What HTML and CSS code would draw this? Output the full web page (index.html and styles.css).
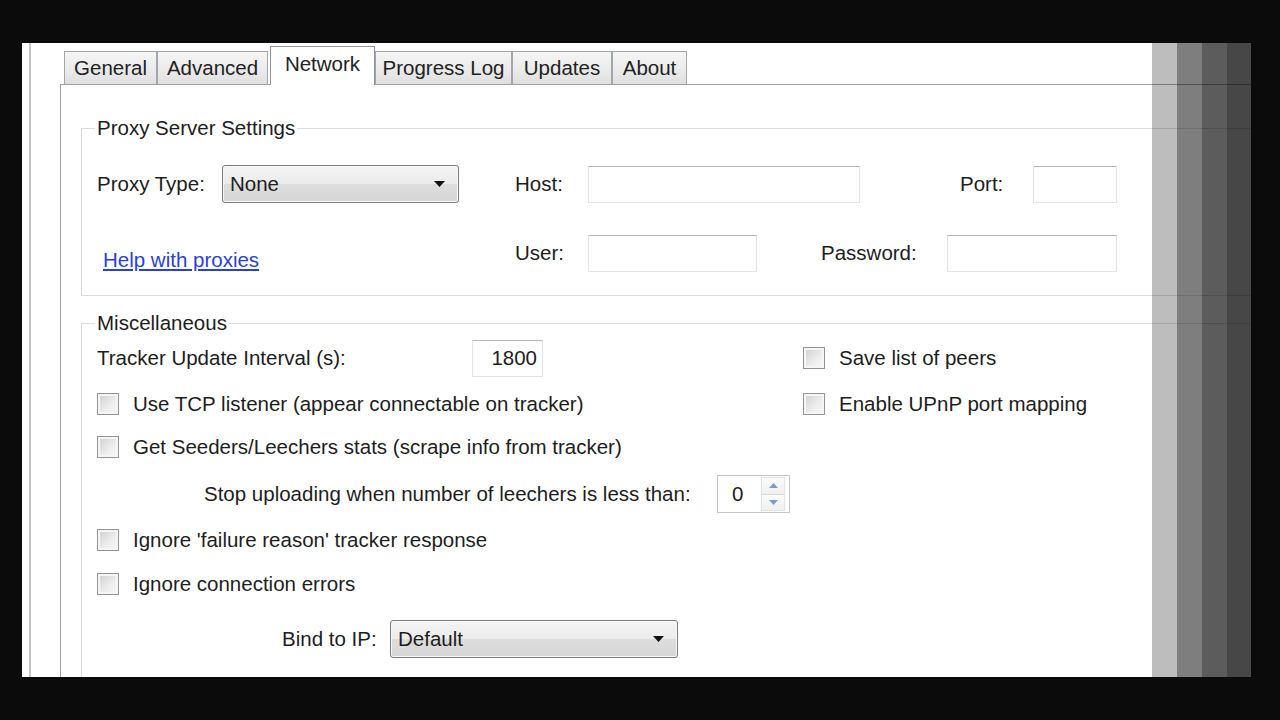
FILE: index.html
```html
<!DOCTYPE html>
<html lang="en">
<head>
<meta charset="utf-8">
<title>Network settings</title>
<link rel="stylesheet" href="styles.css">
</head>
<body>
<div class="stage">
  <div class="window">
    <div class="rail"></div>
    <div class="dialog">
      <div class="tabs">
        <div class="tab t-general">General</div>
        <div class="tab t-advanced">Advanced</div>
        <div class="tab sel t-network">Network</div>
        <div class="tab t-progress">Progress Log</div>
        <div class="tab t-updates">Updates</div>
        <div class="tab t-about">About</div>
      </div>
      <div class="panel">
        <fieldset class="group group-proxy">
          <legend>Proxy Server Settings</legend>
          <div class="prow prow-1">
            <span class="lbl lbl-ptype">Proxy Type:</span>
            <div class="select sel-proxy"><span>None</span><svg class="arrow" width="11" height="6" viewBox="0 0 11 6"><polygon points="0,0 11,0 5.5,6" fill="#111"/></svg></div>
            <span class="lbl lbl-host">Host:</span>
            <div class="input in-host"></div>
            <span class="lbl lbl-port">Port:</span>
            <div class="input in-port"></div>
          </div>
          <div class="prow prow-2">
            <a class="help" href="#">Help with proxies</a>
            <span class="lbl lbl-user">User:</span>
            <div class="input in-user"></div>
            <span class="lbl lbl-pass">Password:</span>
            <div class="input in-pass"></div>
          </div>
        </fieldset>
        <fieldset class="group group-misc">
          <legend>Miscellaneous</legend>
          <div class="mrow row-a">
            <div class="cell">
              <span class="lbl lbl-tracker">Tracker Update Interval (s):</span>
              <div class="input in-interval">1800</div>
            </div>
            <label class="check"><span class="box"></span><span>Save list of peers</span></label>
          </div>
          <div class="mrow row-b">
            <label class="check"><span class="box"></span><span>Use TCP listener (appear connectable on tracker)</span></label>
            <label class="check"><span class="box"></span><span>Enable UPnP port mapping</span></label>
          </div>
          <div class="mrow row-c">
            <label class="check"><span class="box"></span><span>Get Seeders/Leechers stats (scrape info from tracker)</span></label>
          </div>
          <div class="mrow row-d">
            <div class="cell">
              <span class="lbl lbl-stop">Stop uploading when number of leechers is less than:</span>
              <div class="spin">
                <span class="spin-val">0</span>
                <div class="spin-btns">
                  <div class="spin-btn"><svg width="9" height="5" viewBox="0 0 9 5"><polygon points="0,5 9,5 4.5,0" fill="#7c9cc4"/></svg></div>
                  <div class="spin-btn"><svg width="9" height="5" viewBox="0 0 9 5"><polygon points="0,0 9,0 4.5,5" fill="#7c9cc4"/></svg></div>
                </div>
              </div>
            </div>
          </div>
          <div class="mrow row-e">
            <label class="check"><span class="box"></span><span>Ignore 'failure reason' tracker response</span></label>
          </div>
          <div class="mrow row-f">
            <label class="check"><span class="box"></span><span>Ignore connection errors</span></label>
          </div>
          <div class="mrow row-g">
            <div class="cell">
              <span class="lbl lbl-bind">Bind to IP:</span>
              <div class="select sel-bind"><span>Default</span><svg class="arrow" width="11" height="6" viewBox="0 0 11 6"><polygon points="0,0 11,0 5.5,6" fill="#111"/></svg></div>
            </div>
          </div>
        </fieldset>
      </div>
    </div>
  </div>
  <div class="shade">
    <div class="band b1"></div>
    <div class="band b2"></div>
    <div class="band b3"></div>
    <div class="band b4"></div>
  </div>
</div>
</body>
</html>
```
FILE: styles.css
```css
* { box-sizing: border-box; }

html, body {
  margin: 0;
  width: 1280px;
  height: 720px;
  overflow: hidden;
  background: #0b0b0b;
}

body {
  font-family: "Liberation Sans", Arial, sans-serif;
  font-size: 20.5px;
  color: #1d1d1d;
}

.stage {
  position: relative;
  height: 720px;
  padding: 43px 0 0 22px;
}

.window {
  width: 1229px;
  height: 634px;
  background: #ffffff;
  display: flex;
  padding-left: 7px;
  overflow: hidden;
}

.rail {
  flex: none;
  width: 2px;
  background: #c4c4c4;
}

.dialog {
  flex: none;
  width: 1250px;
  margin-left: 29px;
  display: flex;
  flex-direction: column;
}

/* tabs */
.tabs {
  flex: none;
  height: 41px;
  display: flex;
  align-items: flex-end;
  padding-left: 4px;
}

.tab {
  height: 33px;
  border: 1px solid #a3a6ab;
  border-bottom: none;
  background: linear-gradient(#f5f5f5, #ececec 50%, #dfdfdf);
  display: flex;
  align-items: center;
  justify-content: center;
  white-space: nowrap;
  color: #222;
}

.tab.sel {
  height: 39px;
  margin-bottom: -1px;
  margin-left: 2px;
  background: #ffffff;
  border-color: #8f9297;
  padding-bottom: 4px;
  position: relative;
  z-index: 1;
}

.t-general { width: 93px; }
.t-advanced { width: 111px; }
.t-network { width: 105px; }
.t-progress { width: 137px; }
.t-updates { width: 100px; }
.t-about { width: 75px; }

/* panel */
.panel {
  flex: 1;
  border: 1px solid #9da0a6;
  padding: 31px 0 0 20px;
}

.group {
  margin: 0;
  padding: 0 0 23px 0;
  border: 1px solid #dadee3;
  min-width: 0;
}

.group legend {
  margin-left: 13px;
  padding: 0 2px;
  line-height: 24px;
}

.group-misc { margin-top: 15px; }

.lbl { white-space: nowrap; flex: none; }

/* proxy rows */
.prow {
  display: flex;
  align-items: center;
  height: 38px;
}

.prow-1 { margin-top: 25px; }
.prow-2 { margin-top: 31px; }

.lbl-ptype { margin-left: 15px; width: 125px; }
.lbl-host { margin-left: 56px; width: 73px; }
.lbl-port { margin-left: 100px; width: 73px; }
.lbl-user { width: 73px; }
.lbl-pass { margin-left: 64px; width: 126px; }

.help {
  flex: none;
  align-self: flex-end;
  margin-left: 21px;
  width: 412px;
  line-height: 24px;
  color: #2a3fd6;
  text-decoration: underline;
}

.input {
  flex: none;
  height: 37px;
  border: 1px solid #e2e4e8;
  border-top-color: #b4b6ba;
  background: #fff;
}

.in-host { width: 272px; }
.in-port { width: 84px; }
.in-user { width: 169px; }
.in-pass { width: 170px; }

.select {
  flex: none;
  height: 38px;
  border: 1px solid #7a7a7a;
  border-radius: 3px;
  background: linear-gradient(#f4f4f4, #ebebeb 50%, #dddddd 51%, #d6d6d6);
  box-shadow: inset 0 0 0 1px #fafafa;
  display: flex;
  align-items: center;
  justify-content: space-between;
  padding: 0 13px 0 7px;
}

.sel-proxy { width: 237px; }
.sel-bind { width: 288px; }

.arrow { flex: none; }

/* misc rows */
.mrow {
  display: grid;
  grid-template-columns: 706px auto;
  align-items: center;
  height: 38px;
  margin-left: 15px;
}

.row-a { margin-top: 4px; }
.row-b { margin-top: 8px; }
.row-c { margin-top: 5px; }
.row-d { margin-top: 9px; }
.row-e { margin-top: 8px; }
.row-f { margin-top: 6px; }
.row-g { margin-top: 17px; }

.cell {
  display: flex;
  align-items: center;
}

.lbl-tracker { width: 375px; }

.in-interval {
  width: 71px;
  display: flex;
  align-items: center;
  justify-content: flex-end;
  padding-right: 5px;
}

.check {
  display: flex;
  align-items: center;
  gap: 14px;
  white-space: nowrap;
}

.box {
  flex: none;
  width: 22px;
  height: 22px;
  border: 1px solid #939393;
  background: linear-gradient(135deg, #cdcdcd, #eeeeee 60%, #f7f7f7);
  box-shadow: inset 0 0 0 2px #f6f6f6;
}

.lbl-stop { margin-left: 107px; width: 513px; }

.spin {
  flex: none;
  width: 73px;
  height: 38px;
  border: 1px solid #c3c5c9;
  display: flex;
  align-items: center;
  justify-content: space-between;
  padding: 1px 4px 1px 14px;
  background: #fff;
}

.spin-btns {
  width: 24px;
  height: 34px;
  display: flex;
  flex-direction: column;
  gap: 1px;
  background: #d8dade;
  border: 1px solid #e0e2e6;
}

.spin-btn {
  flex: 1;
  display: flex;
  align-items: center;
  justify-content: center;
  background: linear-gradient(#fbfbfb, #eef0f3);
}

.lbl-bind { margin-left: 185px; width: 108px; }

/* faded overlay bands on the right */
.shade {
  position: absolute;
  left: 1152px;
  top: 43px;
  width: 99px;
  height: 634px;
  display: flex;
}

.band { height: 100%; }
.b1 { width: 25px; background: rgba(0, 0, 0, 0.26); }
.b2 { width: 25px; background: rgba(0, 0, 0, 0.505); }
.b3 { width: 25px; background: rgba(0, 0, 0, 0.64); }
.b4 { width: 24px; background: rgba(0, 0, 0, 0.72); }
```
